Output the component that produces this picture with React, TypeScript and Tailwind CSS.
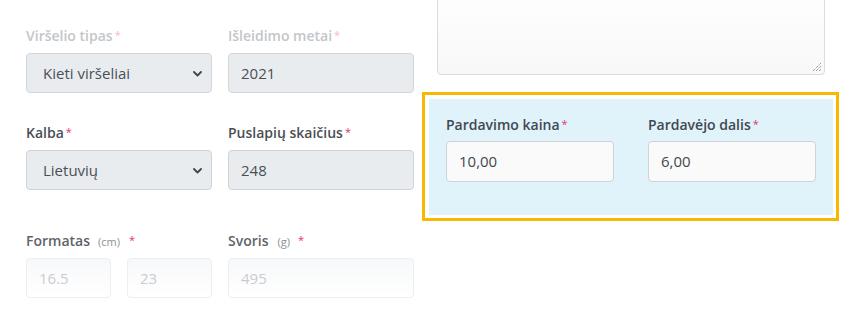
import React from "react";

const Star = ({ className = "" }: { className?: string }) => (
  <sup className={"text-[#e8336b] text-[11px] font-normal relative top-[-2px] ml-[2px] " + className}>*</sup>
);

const Chevron = ({ color = "#444" }: { color?: string }) => (
  <svg width="9" height="6" viewBox="0 0 9 6" className="absolute right-[9px] top-[17px]">
    <path d="M1 1 L4.5 4.5 L8 1" fill="none" stroke={color} strokeWidth="1.8" strokeLinecap="round" strokeLinejoin="round" />
  </svg>
);

export default function App() {
  return (
    <div
      className="w-[845px] h-[318px] bg-white overflow-hidden flex"
      style={{ fontFamily: '"Open Sans", "Noto Sans", sans-serif' }}
    >
      {/* Left form grid */}
      <div className="pl-[26px] w-[422px] shrink-0">
        <div className="grid grid-cols-[186px_186px] gap-x-[16px]">
          {/* Row 1 */}
          <div className="pt-[25px]">
            <div className="h-[21px] text-[14px] leading-[21px] text-[#c3c6c9] font-semibold">
              Viršelio tipas<Star className="!text-[#f3b9c9]" />
            </div>
            <div className="relative mt-[7px] h-[40px] rounded-[4px] border border-[#d3d7dc] bg-[#e9ecef] flex items-center pl-[16px] text-[15px] text-[#495057]">
              Kieti viršeliai
              <Chevron />
            </div>
          </div>
          <div className="pt-[25px]">
            <div className="h-[21px] text-[14px] leading-[21px] text-[#c3c6c9] font-semibold">
              Išleidimo metai<Star className="!text-[#f3b9c9]" />
            </div>
            <div className="mt-[7px] h-[40px] rounded-[4px] border border-[#d3d7dc] bg-[#e9ecef] flex items-center pl-[12px] text-[15px] text-[#495057]">
              2021
            </div>
          </div>

          {/* Row 2 */}
          <div className="pt-[29px]">
            <div className="h-[21px] text-[14px] leading-[21px] text-[#4a4f55] font-semibold">
              Kalba<Star />
            </div>
            <div className="relative mt-[7px] h-[40px] rounded-[4px] border border-[#ced4da] bg-[#e9ecef] flex items-center pl-[16px] text-[15px] text-[#495057]">
              Lietuvių
              <Chevron />
            </div>
          </div>
          <div className="pt-[29px]">
            <div className="h-[21px] text-[14px] leading-[21px] text-[#4a4f55] font-semibold">
              Puslapių skaičius<Star />
            </div>
            <div className="mt-[7px] h-[40px] rounded-[4px] border border-[#ced4da] bg-[#e9ecef] flex items-center pl-[12px] text-[15px] text-[#495057]">
              248
            </div>
          </div>

          {/* Row 3 */}
          <div className="pt-[40px]">
            <div className="h-[21px] text-[14px] leading-[21px] text-[#5f6368] font-semibold flex items-baseline">
              Formatas
              <span className="text-[11px] font-normal text-[#8a8f94] ml-[8px]">(cm)</span>
              <Star className="ml-[9px]" />
            </div>
            <div className="mt-[7px] grid grid-cols-[85px_85px] gap-x-[16px]">
              <div className="h-[40px] rounded-[4px] border border-[#eceef1] bg-gradient-to-b from-[#f7f8fa] to-white flex items-center pl-[12px] text-[15px] text-[#c9ccd0]">
                16.5
              </div>
              <div className="h-[40px] rounded-[4px] border border-[#eceef1] bg-gradient-to-b from-[#f7f8fa] to-white flex items-center pl-[12px] text-[15px] text-[#c9ccd0]">
                23
              </div>
            </div>
          </div>
          <div className="pt-[40px]">
            <div className="h-[21px] text-[14px] leading-[21px] text-[#5f6368] font-semibold flex items-baseline">
              Svoris
              <span className="text-[11px] font-normal text-[#8a8f94] ml-[9px]">(g)</span>
              <Star className="ml-[8px]" />
            </div>
            <div className="mt-[7px] h-[40px] rounded-[4px] border border-[#eceef1] bg-gradient-to-b from-[#f7f8fa] to-white flex items-center pl-[12px] text-[15px] text-[#c9ccd0]">
              495
            </div>
          </div>
        </div>
      </div>

      {/* Right column */}
      <div className="w-[417px] shrink-0">
        <div className="ml-[15px] w-[388px] h-[95px] -mt-[20px] relative rounded-[4px] border border-[#d8dbe0] bg-gradient-to-b from-white to-[#f8f8f8] overflow-hidden">
          <svg width="10" height="10" viewBox="0 0 10 10" className="absolute right-[2px] bottom-[2px]">
            <path d="M1 9 L9 1 M4 9 L9 4 M7 9 L9 7" stroke="#777" strokeWidth="1" strokeDasharray="1 1" />
          </svg>
        </div>

        <div className="mt-[17px] w-[417px] h-[129px] border-[3px] border-[#f8b700] bg-white pt-[4px] pl-[4px] pr-[3px] pb-[3px]">
          <div className="h-full bg-[#e0f2fa] pl-[17px] pr-[17px] pt-[15px] flex gap-x-[34px]">
            <div className="w-[168px]">
              <div className="h-[21px] text-[14px] leading-[21px] text-[#3f4850] font-semibold whitespace-nowrap">
                Pardavimo kaina<Star />
              </div>
              <div className="mt-[6px] h-[41px] rounded-[4px] border border-[#cfd3d7] bg-[#fafafa] flex items-center pl-[12px] text-[15px] text-[#3f4850]">
                10,00
              </div>
            </div>
            <div className="w-[168px]">
              <div className="h-[21px] text-[14px] leading-[21px] text-[#3f4850] font-semibold whitespace-nowrap">
                Pardavėjo dalis<Star />
              </div>
              <div className="mt-[6px] h-[41px] rounded-[4px] border border-[#cfd3d7] bg-[#fafafa] flex items-center pl-[12px] text-[15px] text-[#3f4850]">
                6,00
              </div>
            </div>
          </div>
        </div>
      </div>
    </div>
  );
}
